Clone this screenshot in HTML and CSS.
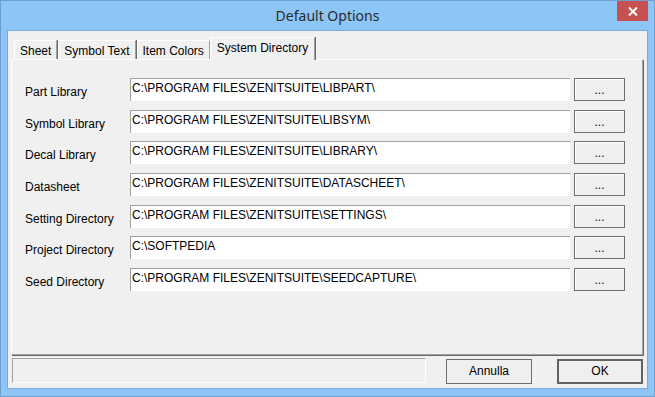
FILE: index.html
```html
<!DOCTYPE html>
<html>
<head>
<meta charset="utf-8">
<title>Default Options</title>
<link rel="stylesheet" href="styles.css">
</head>
<body>
<div class="window">
  <div class="titlebar">
    <span class="title">Default Options</span>
    <div class="close"><svg width="10" height="9" viewBox="0 0 10 9"><path d="M1 0.5 L9 8.5 M9 0.5 L1 8.5" stroke="#fff" stroke-width="2"/></svg></div>
  </div>
  <div class="client">
    <div class="tabs">
      <div class="tab">Sheet</div>
      <div class="tab">Symbol Text</div>
      <div class="tab">Item Colors</div>
      <div class="tab active">System Directory</div>
    </div>
    <div class="panel">
      <div class="grid">
        <div class="label">Part Library</div>
        <div class="field">C:\PROGRAM FILES\ZENITSUITE\LIBPART\</div>
        <div class="browse">...</div>

        <div class="label">Symbol Library</div>
        <div class="field">C:\PROGRAM FILES\ZENITSUITE\LIBSYM\</div>
        <div class="browse">...</div>

        <div class="label">Decal Library</div>
        <div class="field">C:\PROGRAM FILES\ZENITSUITE\LIBRARY\</div>
        <div class="browse">...</div>

        <div class="label">Datasheet</div>
        <div class="field">C:\PROGRAM FILES\ZENITSUITE\DATASCHEET\</div>
        <div class="browse">...</div>

        <div class="label">Setting Directory</div>
        <div class="field">C:\PROGRAM FILES\ZENITSUITE\SETTINGS\</div>
        <div class="browse">...</div>

        <div class="label">Project Directory</div>
        <div class="field">C:\SOFTPEDIA</div>
        <div class="browse">...</div>

        <div class="label">Seed Directory</div>
        <div class="field">C:\PROGRAM FILES\ZENITSUITE\SEEDCAPTURE\</div>
        <div class="browse">...</div>
      </div>
    </div>
    <div class="footer">
      <div class="status"></div>
      <div class="btn">Annulla</div>
      <div class="btn default">OK</div>
    </div>
  </div>
</div>
</body>
</html>
```

FILE: styles.css
```css
* { box-sizing: border-box; }
html, body { margin: 0; padding: 0; }
body {
  width: 655px;
  height: 397px;
  overflow: hidden;
  font-family: "Liberation Sans", Arial, sans-serif;
  font-size: 12px;
  color: #000;
}
.window {
  width: 655px;
  height: 397px;
  background: #8cc5f6;
  border: 1px solid #6f9fcf;
  display: flex;
  flex-direction: column;
}
.titlebar {
  height: 29px;
  flex: none;
  display: flex;
  justify-content: center;
  align-items: center;
  position: relative;
}
.title {
  font-family: "Noto Sans", "Open Sans", sans-serif;
  font-size: 14px;
  color: #2b2b2b;
  margin-top: -1px;
}
.close {
  position: absolute;
  top: 0;
  right: 6px;
  width: 31px;
  height: 20px;
  background: #c75050;
  display: flex;
  align-items: center;
  justify-content: center;
}
.client {
  flex: 1;
  margin: 0 6px 7px 6px;
  background: #f0f0f0;
  border: 1px solid #7aaad8;
  padding: 6px 4px 4px 3px;
  display: flex;
  flex-direction: column;
}
.tabs {
  height: 22px;
  display: flex;
  align-items: flex-end;
  padding-left: 3px;
  flex: none;
}
.tab {
  height: 19px;
  padding: 3px 5px 0 5px;
  border-top: 1px solid #fff;
  border-left: 1px solid #fff;
  border-right: 1px solid #a0a0a0;
  box-shadow: 1px 0 0 #696969;
  margin-right: 1px;
  line-height: 14px;
  white-space: nowrap;
}
.tab.active {
  padding: 3px 6px 0 6px;
  margin-left: -1px;
  margin-bottom: -1px;
  height: 23px;
  background: #f0f0f0;
  position: relative;
  z-index: 1;
}
.panel {
  height: 296px;
  flex: none;
  border-top: 1px solid #fff;
  border-left: 1px solid #fff;
  border-right: 1px solid #a0a0a0;
  border-bottom: 1px solid #a0a0a0;
  box-shadow: 1px 1px 0 #696969;
  padding: 18px 0 0 13px;
}
.grid {
  display: grid;
  grid-template-columns: 105px 440px 55px;
  grid-auto-rows: 23px;
  row-gap: 8.67px;
}
.label {
  padding-top: 7px;
  line-height: 14px;
  white-space: nowrap;
}
.field {
  background: #fff;
  border-top: 1px solid #a0a0a0;
  border-left: 1px solid #a0a0a0;
  padding: 2px 0 0 1px;
  line-height: 14px;
  white-space: nowrap;
  overflow: hidden;
}
.browse {
  margin-left: 4px;
  border: 1px solid #6d6d6d;
  box-shadow: inset 1px 1px 0 #fff;
  background: #efefef;
  text-align: center;
  line-height: 20px;
  padding-top: 1px;
}
.footer {
  margin-top: 3px;
  height: 26px;
  display: flex;
  align-items: flex-start;
  padding-left: 1px;
}
.status {
  width: 414px;
  height: 25px;
  border-top: 1px solid #a0a0a0;
  border-left: 1px solid #a0a0a0;
  border-right: 1px solid #fff;
  border-bottom: 1px solid #fff;
  margin-right: 20px;
}
.btn {
  width: 86px;
  height: 25px;
  margin-top: 1px;
  border: 1px solid #6d6d6d;
  background: #efefef;
  text-align: center;
  line-height: 23px;
}
.btn.default {
  margin-left: 25px;
  border: 2px solid #626262;
  line-height: 21px;
}
```
